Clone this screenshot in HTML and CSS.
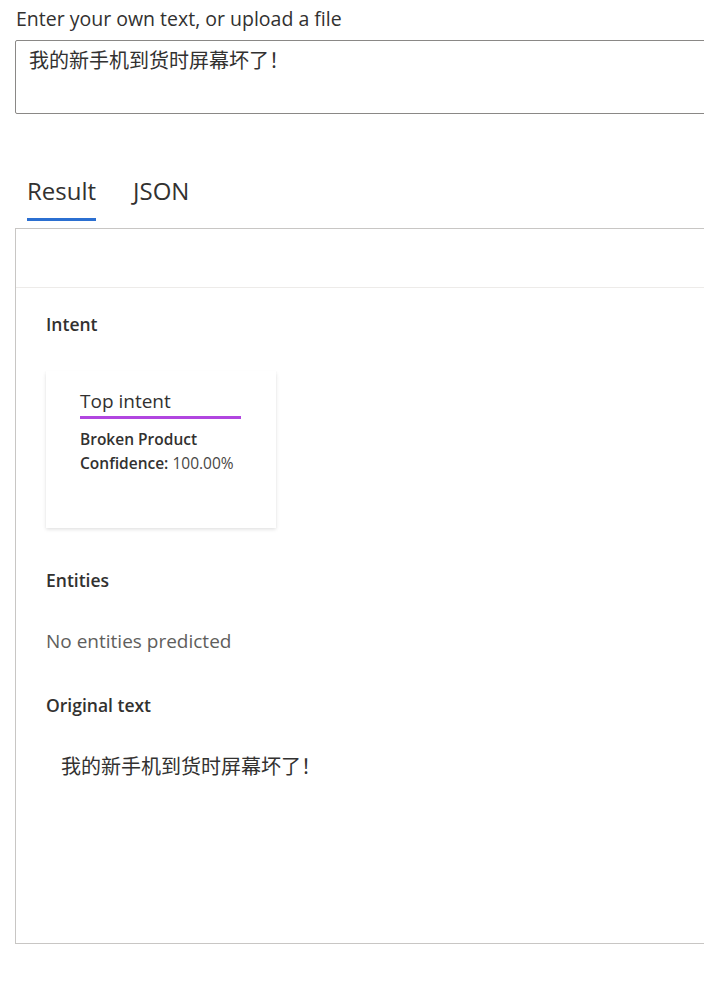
FILE: index.html
```html
<!DOCTYPE html>
<html lang="zh">
<head>
<meta charset="utf-8">
<title>Language Understanding</title>
<link rel="stylesheet" href="styles.css">
</head>
<body>
<div class="page">
  <label class="input-label">Enter your own text, or upload a file</label>
  <div class="textbox">我的新手机到货时屏幕坏了！</div>

  <div class="tabs">
    <div class="tab active">Result</div>
    <div class="tab">JSON</div>
  </div>

  <div class="panel">
    <div class="panel-head"></div>
    <div class="panel-body">
      <h3 class="section-title">Intent</h3>
      <div class="card">
        <div class="card-title">Top intent</div>
        <div class="card-line strong">Broken Product</div>
        <div class="card-line"><span class="strong">Confidence:</span> <span class="light">100.00%</span></div>
      </div>

      <h3 class="section-title entities">Entities</h3>
      <p class="muted">No entities predicted</p>

      <h3 class="section-title original">Original text</h3>
      <p class="original-text">我的新手机到货时屏幕坏了！</p>
    </div>
  </div>
</div>
</body>
</html>
```
FILE: styles.css
```css
html, body {
  margin: 0;
  padding: 0;
  background: #ffffff;
  overflow: hidden;
}
body {
  font-family: "Open Sans", "Noto Sans", "Noto Sans CJK SC", sans-serif;
  color: #323130;
}
.page {
  width: 900px;
  padding: 5px 0 0 15px;
}
.input-label {
  display: block;
  font-size: 19.5px;
  line-height: 28px;
  padding-left: 1px;
  color: #323130;
}
.textbox {
  margin-top: 7px;
  height: 72px;
  border: 1px solid #8a8886;
  border-radius: 2px;
  box-sizing: content-box;
  padding: 0 13px;
  font-family: "Noto Sans CJK JP", "Noto Sans CJK SC", sans-serif;
  font-size: 20px;
  line-height: 38px;
  color: #323130;
}
.tabs {
  display: flex;
  gap: 37px;
  margin-top: 60px;
  padding-left: 12px;
}
.tab {
  font-size: 24px;
  line-height: 34px;
  padding-bottom: 13px;
  color: #323130;
}
.tab.active {
  border-bottom: 3px solid #2b6fd1;
  padding-bottom: 10px;
}
.panel {
  margin-top: 7px;
  border: 1px solid #c8c6c4;
  height: 714px;
}
.panel-head {
  height: 58px;
  border-bottom: 1px solid #edebe9;
}
.panel-body {
  padding: 23px 30px 0 30px;
}
.section-title {
  margin: 0;
  font-size: 17.5px;
  font-weight: 600;
  line-height: 26px;
  color: #323130;
}
.card {
  margin-top: 34px;
  width: 230px;
  height: 157px;
  box-sizing: border-box;
  padding: 17px 34px;
  background: #fff;
  box-shadow: 0 1.6px 3.6px rgba(0,0,0,0.13), 0 0.3px 0.9px rgba(0,0,0,0.11);
}
.card-title {
  display: inline-block;
  font-size: 19px;
  line-height: 26px;
  width: 161px;
  padding-bottom: 2px;
  border-bottom: 3px solid #b146e0;
}
.card-line {
  font-size: 15.5px;
  line-height: 24px;
}
.card-title + .card-line {
  margin-top: 8px;
}
.strong { font-weight: 600; }
.light { font-weight: 400; color: #484644; }
.section-title.entities {
  margin-top: 39px;
}
.muted {
  margin: 35px 0 0 0;
  font-size: 19px;
  line-height: 26px;
  color: #605e5c;
}
.section-title.original {
  margin-top: 38px;
}
.original-text {
  margin: 34px 0 0 15px;
  font-family: "Noto Sans CJK JP", "Noto Sans CJK SC", sans-serif;
  font-size: 20px;
  line-height: 28px;
  color: #323130;
}
```
